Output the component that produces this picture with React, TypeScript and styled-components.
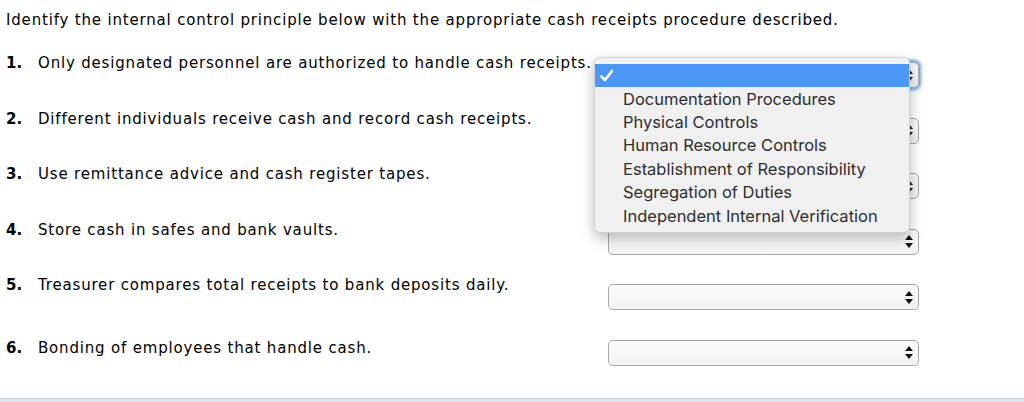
import React from 'react';
import styled, { createGlobalStyle } from 'styled-components';

const GlobalStyle = createGlobalStyle`
  html, body {
    margin: 0;
    padding: 0;
    background: #fff;
  }
  body {
    font-family: 'DejaVu Sans', Verdana, sans-serif;
    color: #000;
  }
`;

const Page = styled.div`
  width: 1024px;
  height: 402px;
  display: flex;
  flex-direction: column;
  overflow: hidden;
`;

const Content = styled.div`
  flex: 1;
  padding-left: 6px;
`;

const Intro = styled.p`
  margin: 11px 0 0;
  font-size: 15px;
  line-height: 18px;
  letter-spacing: 0.82px;
  white-space: nowrap;
`;

const QuestionList = styled.div`
  margin-top: 25px;
  display: grid;
  grid-template-columns: 32px 570px 311px;
  grid-auto-rows: 55.6px;
`;

const Number = styled.span<{ $shift?: number }>`
  font-weight: bold;
  font-size: 15px;
  line-height: 18px;
  padding-top: ${({ $shift }) => $shift ?? 0}px;
`;

const Statement = styled.span<{ $shift?: number }>`
  font-size: 15px;
  line-height: 18px;
  letter-spacing: 0.82px;
  white-space: nowrap;
  padding-top: ${({ $shift }) => $shift ?? 0}px;
`;

const SelectCell = styled.div`
  position: relative;
  padding-top: 8px;
`;

const SelectBox = styled.div<{ $focused?: boolean }>`
  height: 26px;
  box-sizing: border-box;
  border: 1px solid #a7a7a7;
  border-radius: 5px;
  background: linear-gradient(#fbfbfb, #f2f2f2);
  display: flex;
  align-items: center;
  justify-content: flex-end;
  padding-right: 5px;
  box-shadow: ${({ $focused }) =>
    $focused ? '0 0 0 1px #7fb2f0, 0 0 2px 3px rgba(90, 155, 240, 0.55)' : 'none'};
`;

const Menu = styled.div`
  position: absolute;
  left: -14px;
  top: 3px;
  width: 316px;
  box-sizing: border-box;
  padding: 6px 0 5px;
  background: #f0f0f0;
  border: 1px solid rgba(0, 0, 0, 0.12);
  border-radius: 6px;
  box-shadow: 0 5px 14px rgba(0, 0, 0, 0.28);
  font-family: Inter, 'Liberation Sans', sans-serif;
  font-size: 16.5px;
  color: #2e2e2e;
  z-index: 2;
`;

const MenuItem = styled.div<{ $active?: boolean }>`
  height: ${({ $active }) => ($active ? 23 : 23.4)}px;
  display: flex;
  align-items: center;
  padding-left: 28px;
  position: relative;
  background: ${({ $active }) => ($active ? '#4b97f8' : 'transparent')};
  color: ${({ $active }) => ($active ? '#fff' : '#2e2e2e')};
`;

const Check = styled.svg`
  position: absolute;
  left: 4px;
  top: 5px;
`;

const Footer = styled.div`
  height: 3px;
  border-top: 1px solid #c3d0dc;
  background: #dde5ee;
`;

function Arrows() {
  return (
    <svg width="8" height="13" viewBox="0 0 8 13">
      <path d="M4 0 L8 5 L0 5 Z" fill="#111" />
      <path d="M0 8 L8 8 L4 13 Z" fill="#111" />
    </svg>
  );
}

const options = [
  'Documentation Procedures',
  'Physical Controls',
  'Human Resource Controls',
  'Establishment of Responsibility',
  'Segregation of Duties',
  'Independent Internal Verification',
];

const questions = [
  { text: 'Only designated personnel are authorized to handle cash receipts.' },
  { text: 'Different individuals receive cash and record cash receipts.' },
  { text: 'Use remittance advice and cash register tapes.' },
  { text: 'Store cash in safes and bank vaults.' },
  { text: 'Treasurer compares total receipts to bank deposits daily.' },
  { text: 'Bonding of employees that handle cash.', shift: 7 },
];

export default function App() {
  return (
    <>
      <GlobalStyle />
      <Page>
        <Content>
          <Intro>
            Identify the internal control principle below with the appropriate cash receipts procedure described.
          </Intro>
          <QuestionList>
            {questions.map((q, i) => (
              <React.Fragment key={i}>
                <Number $shift={q.shift}>{i + 1}.</Number>
                <Statement $shift={q.shift}>{q.text}</Statement>
                <SelectCell>
                  <SelectBox $focused={i === 0}>
                    <Arrows />
                  </SelectBox>
                  {i === 0 && (
                    <Menu>
                      <MenuItem $active>
                        <Check width="16" height="14" viewBox="0 0 16 14">
                          <path
                            d="M2.5 7.5 L6 11 L13 2"
                            fill="none"
                            stroke="#fff"
                            strokeWidth="2.6"
                            strokeLinecap="round"
                            strokeLinejoin="round"
                          />
                        </Check>
                      </MenuItem>
                      {options.map((o) => (
                        <MenuItem key={o}>{o}</MenuItem>
                      ))}
                    </Menu>
                  )}
                </SelectCell>
              </React.Fragment>
            ))}
          </QuestionList>
        </Content>
        <Footer />
      </Page>
    </>
  );
}
